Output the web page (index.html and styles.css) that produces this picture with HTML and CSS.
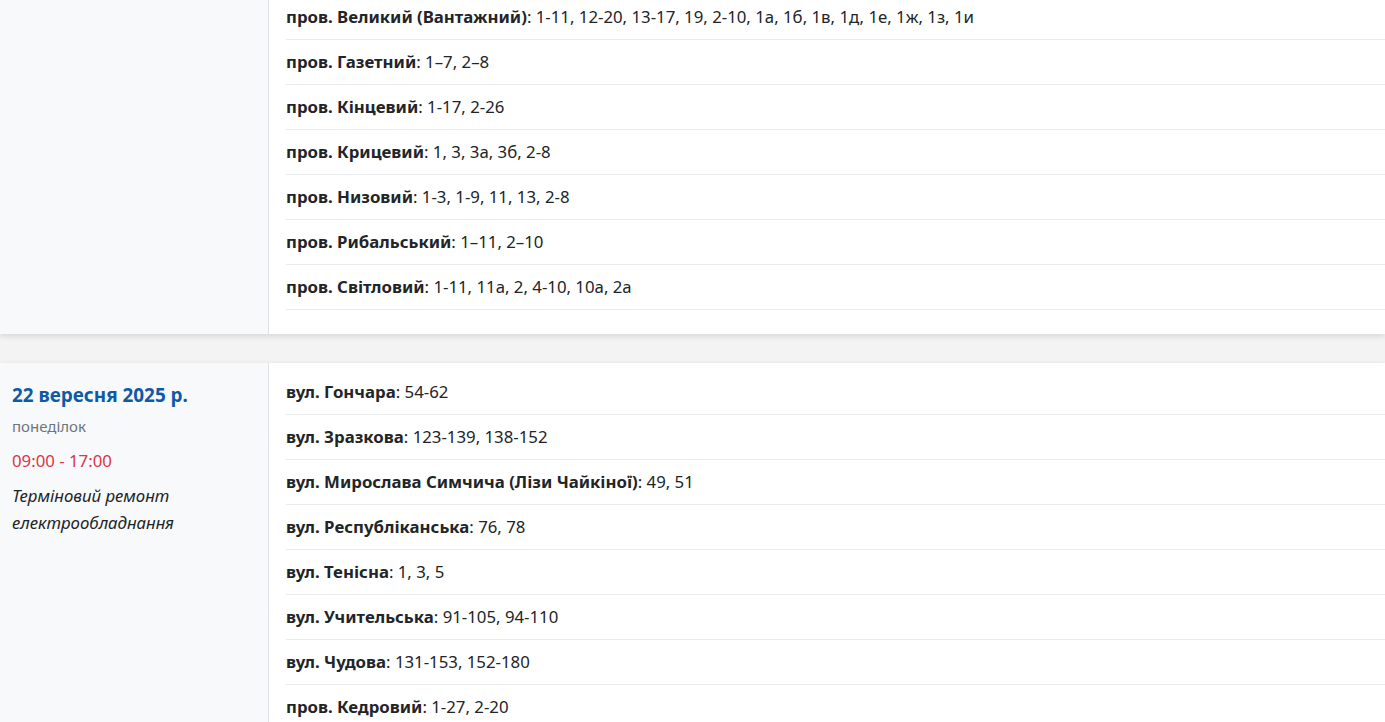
FILE: index.html
```html
<!DOCTYPE html>
<html lang="uk">
<head>
    <meta charset="UTF-8">
    <meta name="viewport" content="width=device-width, initial-scale=1.0">
    <title>Графік відключень</title>
    <link rel="stylesheet" href="styles.css">
</head>
<body>

    <div class="day-card first">
        <div class="day-info"></div>
        <div class="streets">
            <div class="street"><b>пров. Великий (Вантажний)</b>: 1-11, 12-20, 13-17, 19, 2-10, 1а, 1б, 1в, 1д, 1е, 1ж, 1з, 1и</div>
            <div class="street"><b>пров. Газетний</b>: 1–7, 2–8</div>
            <div class="street"><b>пров. Кінцевий</b>: 1-17, 2-26</div>
            <div class="street"><b>пров. Крицевий</b>: 1, 3, 3а, 3б, 2-8</div>
            <div class="street"><b>пров. Низовий</b>: 1-3, 1-9, 11, 13, 2-8</div>
            <div class="street"><b>пров. Рибальський</b>: 1–11, 2–10</div>
            <div class="street"><b>пров. Світловий</b>: 1-11, 11а, 2, 4-10, 10а, 2а</div>
        </div>
    </div>

    <div class="day-card">
        <div class="day-info">
            <div class="date">22 вересня 2025 р.</div>
            <div class="weekday">понеділок</div>
            <div class="time">09:00 - 17:00</div>
            <div class="reason">Терміновий ремонт електрообладнання</div>
        </div>
        <div class="streets">
            <div class="street"><b>вул. Гончара</b>: 54-62</div>
            <div class="street"><b>вул. Зразкова</b>: 123-139, 138-152</div>
            <div class="street"><b>вул. Мирослава Симчича (Лізи Чайкіної)</b>: 49, 51</div>
            <div class="street"><b>вул. Республіканська</b>: 76, 78</div>
            <div class="street"><b>вул. Тенісна</b>: 1, 3, 5</div>
            <div class="street"><b>вул. Учительська</b>: 91-105, 94-110</div>
            <div class="street"><b>вул. Чудова</b>: 131-153, 152-180</div>
            <div class="street"><b>пров. Кедровий</b>: 1-27, 2-20</div>
        </div>
    </div>

</body>
</html>
```

FILE: styles.css
```css
body {
    font-family: "Noto Sans", "Open Sans", sans-serif;
    font-size: 16.8px;
    color: #212529;
    background-color: #f3f3f3;
    margin: 0;
    padding: 0;
}
.day-card {
    display: grid;
    grid-template-columns: 269px 1fr;
    background: #fff;
    box-shadow: 0 2px 6px rgba(0,0,0,0.12);
    margin-bottom: 29px;
}
.day-card.first {
    margin-top: -12px;
}
.day-info {
    background-color: #f8f9fa;
    border-right: 1px solid #dee2e6;
    padding: 19px 12px;
}
.date {
    color: #0d5aa7;
    font-weight: bold;
    font-size: 18.9px;
    line-height: 27px;
}
.weekday {
    color: #6c757d;
    font-size: 15px;
    margin-top: 7px;
}
.time {
    color: #dc3545;
    margin-top: 13px;
}
.reason {
    font-style: italic;
    line-height: 27px;
    margin-top: 10px;
}
.streets {
    padding: 7px 0 24px 17px;
}
.street {
    line-height: 24px;
    padding: 10px 0;
    border-bottom: 1px solid #e9ecef;
}
.street b {
    font-weight: 700;
}
```
